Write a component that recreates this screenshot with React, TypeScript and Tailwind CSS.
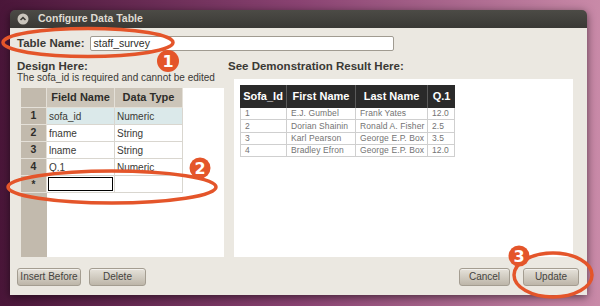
const font = "font-['Liberation_Sans',Arial,sans-serif]";

const designRows = [
  { n: "1", field: "sofa_id", type: "Numeric", selected: true },
  { n: "2", field: "fname", type: "String", selected: false },
  { n: "3", field: "lname", type: "String", selected: false },
  { n: "4", field: "Q.1", type: "Numeric", selected: false },
];

const demoRows = [
  ["1", "E.J. Gumbel", "Frank Yates", "12.0"],
  ["2", "Dorian Shainin", "Ronald A. Fisher", "2.5"],
  ["3", "Karl Pearson", "George E.P. Box", "3.5"],
  ["4", "Bradley Efron", "George E.P. Box", "12.0"],
];

const demoWidths = ["w-[47px]", "w-[69px]", "w-[72px]", "w-[27px]"];

function Button({ label, width }: { label: string; width: string }) {
  return (
    <button
      type="button"
      className={`${width} h-[18px] rounded-[3px] border border-[#a49d91] bg-gradient-to-b from-[#e6e2da] to-[#bdb6a9] text-[10px] leading-none text-[#46443f] shadow-[inset_0_1px_0_rgba(255,255,255,0.5)]`}
    >
      {label}
    </button>
  );
}

function DesignGrid() {
  return (
    <div className="ml-[4px] flex h-[169px] w-[203px] flex-col bg-white">
      <div className="flex h-[20px] shrink-0">
        <div className="w-[26px] border-b border-r border-[#e4e0d8] bg-[#c2baad]" />
        <div className="flex w-[68px] items-center justify-center border-b border-r border-[#e4e0d8] bg-[#ccc5b9] text-[11px] font-bold text-[#2e2d2a]">
          Field Name
        </div>
        <div className="flex w-[68px] items-center justify-center border-b border-r border-[#e4e0d8] bg-[#ccc5b9] text-[11px] font-bold text-[#2e2d2a]">
          Data Type
        </div>
        <div className="flex-1" />
      </div>
      {designRows.map((r) => (
        <div key={r.n} className="flex h-[17px] shrink-0">
          <div className="flex w-[26px] items-center justify-center border-b border-r border-[#e4e0d8] bg-[#c2baad] text-[10.5px] font-bold text-[#2e2d2a]">
            {r.n}
          </div>
          <div
            className={`flex w-[68px] items-center border-b border-r border-[#d9d6cf] pl-[2px] text-[10px] text-[#3a3935] ${r.selected ? "bg-[#dbe9ea]" : "bg-white"}`}
          >
            {r.field}
          </div>
          <div
            className={`flex w-[68px] items-center border-b border-r border-[#d9d6cf] pl-[2px] text-[10px] text-[#3a3935] ${r.selected ? "bg-[#dbe9ea]" : "bg-white"}`}
          >
            {r.type}
          </div>
          <div className="flex-1" />
        </div>
      ))}
      <div className="flex h-[17px] shrink-0">
        <div className="flex w-[26px] items-center justify-center border-b border-r border-[#e4e0d8] bg-[#c2baad] text-[10px] font-bold text-[#2e2d2a]">
          *
        </div>
        <div className="flex w-[68px] items-center border-b border-r border-[#d9d6cf] p-px">
          <div className="h-full w-full border-[1.5px] border-black bg-white" />
        </div>
        <div className="w-[68px] border-b border-r border-[#d9d6cf]" />
        <div className="flex-1" />
      </div>
      <div className="flex flex-1">
        <div className="w-[26px] bg-[#c2baad]" />
        <div className="flex-1" />
      </div>
    </div>
  );
}

function DemoTable() {
  return (
    <div className="ml-[6px] mt-[6px] w-[215px]">
      <div className="flex h-[23px] bg-[#2a2a2a]">
        {["Sofa_Id", "First Name", "Last Name", "Q.1"].map((h, i) => (
          <div
            key={h}
            className={`${demoWidths[i]} flex items-center justify-center border-r border-[#5a5a5a] text-[11px] font-bold text-white last:border-r-0`}
          >
            {h}
          </div>
        ))}
      </div>
      {demoRows.map((row) => (
        <div key={row[0]} className="flex h-[12.25px] border-b border-[#cfcfcf]">
          {row.map((c, i) => (
            <div
              key={i}
              className={`${demoWidths[i]} flex items-center border-r border-[#cfcfcf] pl-[4px] text-[8.5px] leading-none tracking-[0.1px] text-[#737373] first:border-l`}
            >
              {c}
            </div>
          ))}
        </div>
      ))}
    </div>
  );
}

function Annotations() {
  return (
    <svg
      className="pointer-events-none absolute left-0 top-0"
      width="600"
      height="306"
      viewBox="0 0 600 306"
    >
      <g fill="none" stroke="#e4552a" strokeWidth="3.5">
        <ellipse cx="88" cy="42.5" rx="85" ry="14" />
        <ellipse cx="112" cy="187" rx="104" ry="16" />
        <ellipse cx="553" cy="275" rx="39" ry="22" />
      </g>
      <g fill="#e4552a">
        <circle cx="168" cy="61" r="11" />
        <circle cx="200" cy="168" r="10.5" />
        <circle cx="519" cy="256" r="10.5" />
      </g>
      <g
        fill="#fff"
        fontFamily="'DejaVu Sans', sans-serif"
        fontWeight="bold"
        fontSize="16"
        textAnchor="middle"
      >
        <text x="168" y="67">1</text>
        <text x="200" y="174">2</text>
        <text x="519" y="262">3</text>
      </g>
    </svg>
  );
}

export default function App() {
  return (
    <div
      className={`relative h-[306px] w-[600px] overflow-hidden bg-gradient-to-r from-[#4a1639] via-[#8a4372] to-[#c98aa8] pl-[10px] pt-[10px] ${font}`}
    >
      <div className="flex h-[285px] w-[577px] flex-col overflow-hidden rounded-t-[5px] shadow-[0_2px_8px_rgba(0,0,0,0.55)]">
        <div className="flex h-[18px] shrink-0 items-center gap-[9px] bg-gradient-to-b from-[#4c4b46] to-[#3a3935] pl-[7px]">
          <svg width="12" height="12" viewBox="0 0 12 12">
            <circle cx="6" cy="6" r="5.5" fill="#c9c5bc" />
            <path d="M3.5 7 L6 4.6 L8.5 7" fill="none" stroke="#3c3b37" strokeWidth="1.6" />
          </svg>
          <span className="text-[10.5px] font-bold text-[#dfdbd2]">Configure Data Table</span>
        </div>
        <div className="flex flex-1 flex-col bg-[#ebe8e1] px-[7px] pb-[9px] pt-[8px]">
          <div className="flex h-[15px] items-center gap-[5px]">
            <span className="text-[11.5px] font-bold text-[#3a3935]">Table Name:</span>
            <div className="flex h-[15px] w-[304px] items-center rounded-[2px] border border-[#a09b91] bg-white pl-[3px] text-[10.5px] text-[#2e2d2a]">
              staff_survey
            </div>
          </div>
          <div className="mt-[9px] flex">
            <div className="flex w-[211px] flex-col">
              <div className="h-[12px] text-[11.5px] font-bold leading-[12px] text-[#3a3935]">Design Here:</div>
              <div className="h-[12px] text-[10px] leading-[12px] text-[#3a3935]">
                The sofa_id is required and cannot be edited
              </div>
              <div className="mt-[4px]">
                <DesignGrid />
              </div>
            </div>
            <div className="flex w-[345px] flex-col">
              <div className="h-[12px] text-[11.5px] font-bold leading-[12px] text-[#3a3935]">
                See Demonstration Result Here:
              </div>
              <div className="ml-[6px] mt-[7px] h-[178px] w-[339px] bg-white">
                <DemoTable />
              </div>
            </div>
          </div>
          <div className="mt-[11px] flex items-center justify-between">
            <div className="flex gap-[8px]">
              <Button label="Insert Before" width="w-[64px]" />
              <Button label="Delete" width="w-[57px]" />
            </div>
            <div className="mr-[1px] flex gap-[13px]">
              <Button label="Cancel" width="w-[51px]" />
              <Button label="Update" width="w-[56px]" />
            </div>
          </div>
        </div>
      </div>
      <Annotations />
    </div>
  );
}
